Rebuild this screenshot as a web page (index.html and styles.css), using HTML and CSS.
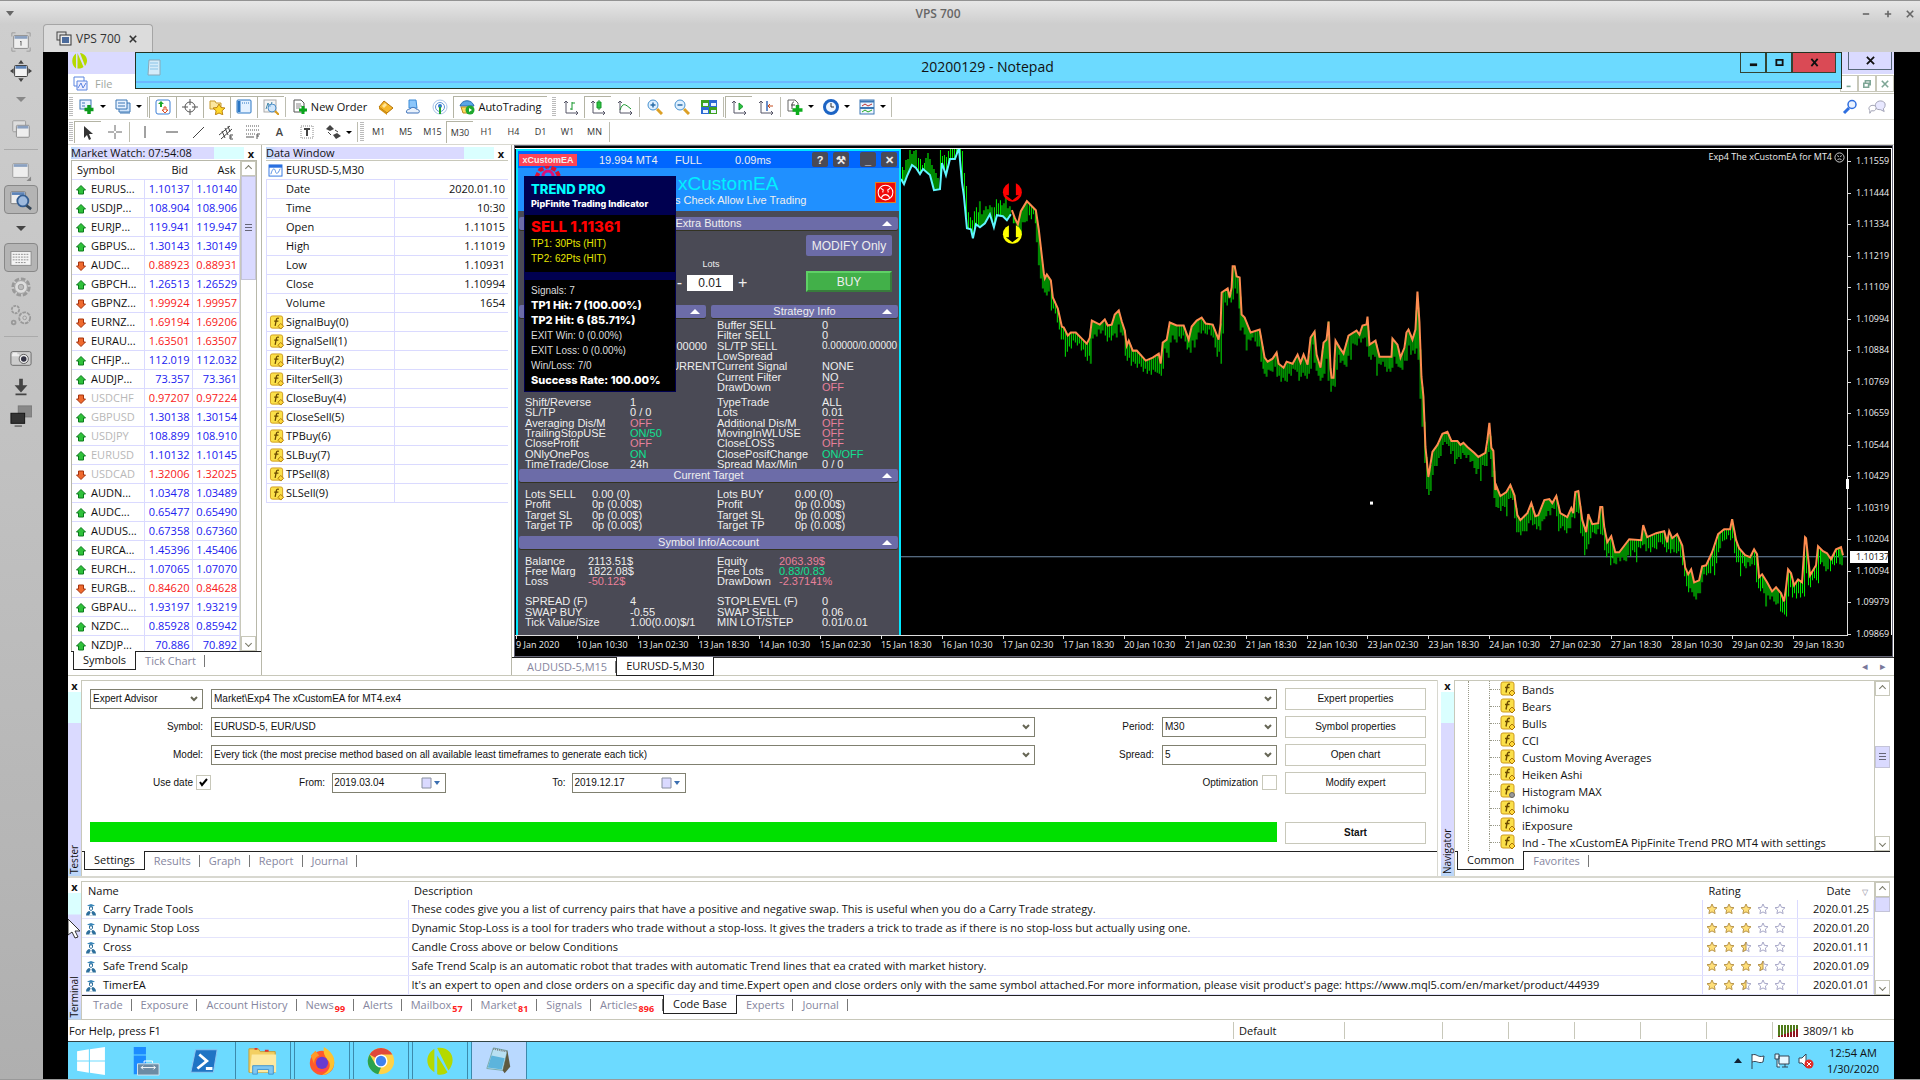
FILE: index.html
```html
<!DOCTYPE html>
<html lang="en">
<head>
    <meta charset="UTF-8">
    <meta name="viewport" content="width=device-width, initial-scale=1.0">
    <title>VPS 700</title>
    <link rel="stylesheet" href="styles.css">
</head>
<body>

<!-- shared icons -->
<svg class="sprite" aria-hidden="true">
    <symbol id="up" viewBox="0 0 12 12"><path d="M6 1.500l4.500 4.500H8.500v4h-5V6h-2z" fill="#2fc13a" stroke="#0c7a1c"/></symbol>
    <symbol id="down" viewBox="0 0 12 12"><path d="M6 10.500L1.500 6h2V2h5v4h2z" fill="#ef6a2e" stroke="#a5340f"/></symbol>
    <symbol id="fx" viewBox="0 0 16 16"><rect x="1" y="1" width="13" height="13" rx="2" fill="#fbe04a" stroke="#cf9b1d"/><path d="M10 3.500c-2-.8-2.500.5-2.800 2L6 11.500M5 6.500h4.500" fill="none" stroke="#6b4a00" stroke-width="1.400"/><path d="M12 9l3 3-3 3-3-3z" fill="#ffd83a" stroke="#a87509"/></symbol>
    <symbol id="fxg" viewBox="0 0 16 16"><rect x="1" y="1" width="13" height="13" rx="2" fill="#fbe04a" stroke="#cf9b1d"/><path d="M10 3.500c-2-.8-2.500.5-2.800 2L6 11.500M5 6.500h4.500" fill="none" stroke="#6b4a00" stroke-width="1.400"/><circle cx="12" cy="12" r="2.500" fill="#999" stroke="#666"/></symbol>
    <symbol id="expert" viewBox="0 0 12 12"><path d="M2 1.500L6 0l4 1.500L6 3z" fill="#3a86b8"/><path d="M4.500 3h3v2.500L6 6.500 4.500 5.500z" fill="#fff" stroke="#2d6f9c"/><path d="M1 11.500c0-3 2-4.500 3.500-4.500L6 9l1.500-2c1.500 0 3.500 1.500 3.500 4.500z" fill="#2d6f9c"/><path d="M4 11.500L6 8l2 3.500z" fill="#fff"/></symbol>
    <symbol id="star" viewBox="0 0 12 12"><path d="M6 1l1.500 3.300 3.500.4-2.600 2.400.7 3.500L6 8.900l-3.100 1.700.7-3.500L1 4.700l3.500-.4z"/></symbol>
    <symbol id="halfstar" viewBox="0 0 12 12"><path d="M6 1l1.500 3.300 3.500.4-2.600 2.400.7 3.500L6 8.900l-3.100 1.700.7-3.500L1 4.700l3.500-.4z" fill="#fff" stroke="#a8a8c8"/><path d="M6 1v7.900l-3.100 1.700.7-3.500L1 4.700l3.500-.4z" fill="#ffdf78" stroke="#b9954a"/></symbol>
</svg>

<header class="host-title">
    <span class="host-menu"></span>
    <h1>VPS 700</h1>
    <div class="host-buttons">
        <button aria-label="Minimize"><svg viewBox="0 0 10 10"><path d="M1 5h8"/></svg></button>
        <button aria-label="Maximize"><svg viewBox="0 0 10 10"><path d="M1 5h8M5 1v8"/></svg></button>
        <button aria-label="Close"><svg viewBox="0 0 10 10"><path d="M1 1l8 8M9 1L1 9"/></svg></button>
    </div>
</header>
<div class="host-tabs">
    <div class="host-tab">
        <svg viewBox="0 0 16 16" width="16" height="16"><rect x="1" y="1" width="9" height="8" fill="#ddd" stroke="#444"/><rect x="4" y="4" width="11" height="10" fill="#eee" stroke="#333"/><rect x="6" y="6" width="7" height="6" fill="#4a6a9c"/></svg>
        VPS 700
        <button aria-label="Close tab"><svg viewBox="0 0 10 10"><path d="M1 1l8 8M9 1L1 9"/></svg></button>
    </div>
</div>

<div class="host">
    <nav class="side">
        <button aria-label="Actual size"><svg viewBox="0 0 24 24"><path d="M2 6V2h4M18 2h4v4M22 18v4h-4M6 22H2v-4" fill="none" stroke="#999"/><rect x="4" y="5" width="16" height="14" rx="1" fill="#eee" stroke="#888"/><path d="M5 7h14" stroke="#8aa0c0" stroke-width="3"/><path d="M11 12l1-1v5" fill="none" stroke="#555"/></svg></button>
        <button aria-label="Full screen"><svg viewBox="0 0 24 24"><path d="M12 0l3 4H9zM12 24l3-4H9zM0 12l4-3v6zM24 12l-4-3v6z" fill="#444"/><rect x="5" y="6" width="14" height="12" rx="1" fill="#f4f4f4" stroke="#333"/><path d="M6 8h12" stroke="#5e84b8" stroke-width="3"/></svg></button>
        <button aria-label="More" class="caret off"></button>
        <button aria-label="Windows"><svg viewBox="0 0 24 24"><rect x="3" y="3" width="14" height="12" rx="1" fill="#ddd" stroke="#999"/><rect x="7" y="8" width="14" height="13" rx="1" fill="#eee" stroke="#888"/><path d="M8 10h12" stroke="#8aa0c0" stroke-width="3"/></svg></button>
        <hr>
        <button aria-label="Resize"><svg viewBox="0 0 24 24"><rect x="3" y="4" width="17" height="15" rx="1" fill="#eee" stroke="#999"/><path d="M4 6h15" stroke="#8aa0c0" stroke-width="3"/><path d="M23 18v5h-5z" fill="#888"/></svg></button>
        <button aria-label="Scale" class="on"><svg viewBox="0 0 24 24"><rect x="1" y="3" width="16" height="13" rx="1" fill="#eee" stroke="#777"/><path d="M2 5h14" stroke="#5e84b8" stroke-width="3"/><circle cx="14" cy="13" r="6" fill="#9db9dd" stroke="#345e92" stroke-width="2"/><path d="M18 18l5 4" stroke="#345" stroke-width="3"/></svg></button>
        <button aria-label="Scale options" class="caret"></button>
        <button aria-label="Keyboard" class="on"><svg viewBox="0 0 24 24"><rect x="1" y="5" width="22" height="15" fill="#f4f4f4" stroke="#888"/><path d="M3 8h18M3 11h18M3 14h18M6 17h12" stroke="#888" stroke-dasharray="2 1"/></svg></button>
        <button aria-label="Settings"><svg viewBox="0 0 24 24" fill="#ccc" stroke="#999"><circle cx="12" cy="12" r="9" stroke-width="3" stroke-dasharray="5 2"/><circle cx="12" cy="12" r="7" fill="#ddd"/><circle cx="12" cy="12" r="3" fill="#bbb"/></svg></button>
        <button aria-label="Tools"><svg viewBox="0 0 24 24" fill="#ccc" stroke="#999"><circle cx="16" cy="14" r="6" stroke-width="2" stroke-dasharray="4 1"/><circle cx="16" cy="14" r="2"/><circle cx="6" cy="5" r="4" stroke-width="2" stroke-dasharray="3 1"/><circle cx="4" cy="19" r="2" stroke-width="2"/></svg></button>
        <hr>
        <button aria-label="Screenshot"><svg viewBox="0 0 24 24"><rect x="1" y="5" width="22" height="15" rx="2" fill="#ccc" stroke="#666"/><path d="M2 9h8M3 7h5" stroke="#eee" stroke-width="2"/><circle cx="15" cy="13" r="5" fill="#eee" stroke="#555"/><circle cx="15" cy="13" r="3" fill="#334"/></svg></button>
        <button aria-label="Download"><svg viewBox="0 0 24 24"><path d="M10 3h4v7h5l-7 8-7-8h5zM6 19h12v2H6z" fill="#444"/></svg></button>
        <button aria-label="Monitors"><svg viewBox="0 0 24 24"><rect x="9" y="1" width="15" height="12" fill="#888" stroke="#777"/><rect x="1" y="9" width="15" height="11" fill="#333" stroke="#111"/><path d="M5 23h8" stroke="#777" stroke-width="2"/></svg></button>
    </nav>

    <div class="desktop">
        <div class="mt4">
            <div class="mt4-title">
                <svg viewBox="0 0 18 18" width="18" height="18"><path d="M6 1.500v15C1 13 1 5 6 1.500zM7.500 1l6 14c-2 1.500-4 1.700-6 1.500zM10 1c7 1 9 8 5 13z" fill="#b5d900"/></svg>
                <button class="mt4-close" aria-label="Close MetaTrader"><svg viewBox="0 0 10 10"><path d="M1 1l8 8M9 1L1 9"/></svg></button>
            </div>
            <div class="mt4-menu">
                <svg viewBox="0 0 16 16" width="16" height="16"><path d="M2 1h10v9H2z" fill="#fff" stroke="#5b85e0"/><path d="M5 5h10v9H5z" fill="#eef" stroke="#5b85e0"/><path d="M6 12l3-5 2 5 3-5" fill="none" stroke="#5b85e0"/></svg>
                <a href="#">File</a>
                <div class="mdi">
                    <button aria-label="Minimize chart"><svg viewBox="0 0 10 10"><path d="M2 8h5"/></svg></button>
                    <button aria-label="Restore chart"><svg viewBox="0 0 10 10"><path d="M3 4V1h6v5H7M1 4h6v5H1z"/></svg></button>
                    <button aria-label="Close chart"><svg viewBox="0 0 10 10"><path d="M1 1l8 8M9 1L1 9"/></svg></button>
                </div>
            </div>

            <div class="toolbar">
                <i class="grip"></i>
                <button class="tool drop" aria-label="New chart"><svg viewBox="0 0 16 16"><rect x="1" y="1" width="11" height="9" fill="#e8f2ff" stroke="#3a77b5"/><path d="M3 4h3M3 7h3" stroke="#3a77b5"/><path d="M10 6v9M5.500 10.500h9" stroke="#0b9a1c" stroke-width="3.500"/></svg></button>
                <button class="tool drop" aria-label="Profiles"><svg viewBox="0 0 16 16"><path d="M4 4h11v9H4z" fill="#cfe3fa" stroke="#3a77b5"/><path d="M1 1h11v9H1z" fill="#e8f2ff" stroke="#3a77b5"/><path d="M3 4h7M3 7h7M5 14h10" stroke="#3a77b5"/></svg></button>
                <i class="sep"></i>
                <button class="tool down" aria-label="Market Watch"><svg viewBox="0 0 16 16"><rect x="1" y="1" width="14" height="14" rx="2" fill="#fff" stroke="#3b7fd6"/><path d="M6 2l3 3H7v3H5V5H3z" fill="#1da82a"/><path d="M10 14l-3-3h2V8h2v3h2z" fill="#fff" stroke="#dd4a22"/></svg></button>
                <button class="tool down" aria-label="Data Window"><svg viewBox="0 0 16 16" fill="none" stroke="#555"><circle cx="8" cy="8" r="5"/><path d="M8 0v6M8 10v6M0 8h6M10 8h6"/></svg></button>
                <button class="tool down" aria-label="Navigator"><svg viewBox="0 0 16 16"><path d="M1 2h5l1 2h5v6H1z" fill="#fbe7a0" stroke="#c79b2f"/><path d="M10 5l2 3.500 4 .5-3 2.800.8 4L10 14l-3.600 1.800.7-4L4 9l4-.5z" fill="#ffd92e" stroke="#bd8410"/></svg></button>
                <button class="tool down" aria-label="Terminal"><svg viewBox="0 0 16 16"><rect x="1" y="1" width="14" height="13" rx="1" fill="#e4f1ff" stroke="#2a76c4"/><path d="M3 2v11" stroke="#2a76c4" stroke-width="3"/><path d="M6 4h7" stroke="#2a76c4" stroke-dasharray="1 1"/></svg></button>
                <button class="tool down" aria-label="Strategy Tester"><svg viewBox="0 0 16 16"><rect x="1" y="1" width="12" height="12" fill="#f4f4f4" stroke="#aaa"/><path d="M3 10l2-6 2 4 2-5" fill="none" stroke="#48a"/><circle cx="9" cy="9" r="4" fill="#bfe0ffaa" stroke="#4d8fc9"/><path d="M12 12l4 4" stroke="#d99a1c" stroke-width="2"/></svg></button>
                <i class="sep"></i>
                <button class="tool order"><svg viewBox="0 0 16 16"><path d="M2 1h7l3 3v9H2z" fill="#fff" stroke="#555"/><path d="M4 5h5M4 7h6M4 9h4" stroke="#888"/><path d="M11 7v8M7 11h8" stroke="#0aa51c" stroke-width="3"/></svg>New Order</button>
                <button class="tool" aria-label="MetaEditor"><svg viewBox="0 0 16 16"><path d="M1 8l5-6 9 7-6 5z" fill="#f6b82c" stroke="#b37209"/><path d="M1 8l8 6v2L1 10z" fill="#d3900f"/><path d="M4 7l3-3 2 2-3 3z" fill="#ffe59a"/></svg></button>
                <button class="tool" aria-label="Options"><svg viewBox="0 0 16 16"><path d="M4 1h7l1 8H4z" fill="#8cc6fa" stroke="#3a8ad6"/><path d="M2 14c-2-3 2-4 3-4 2-3 6-1 6 0 4 0 4 4 2 4z" fill="#e9f1fb" stroke="#3a6fb8"/></svg></button>
                <button class="tool" aria-label="Signals"><svg viewBox="0 0 16 16" fill="none"><circle cx="8" cy="8" r="7" stroke="#a9c4e8"/><circle cx="8" cy="8" r="4.500" stroke="#5d93d6"/><circle cx="8" cy="7" r="2" fill="#2f79c9"/><path d="M8 8v7" stroke="#1ea52c" stroke-width="2"/></svg></button>
                <button class="tool down auto"><svg viewBox="0 0 16 16"><path d="M1 7c2-7 12-7 14 0z" fill="#5aa6e8" stroke="#2a6cb0"/><path d="M2 8h12l-2 6H4z" fill="#ffd85c" stroke="#b98a1c"/><circle cx="11" cy="11" r="4.500" fill="#1fa82d"/><path d="M10 9v4l3-2z" fill="#fff"/></svg>AutoTrading</button>
                <i class="grip"></i>
                <button class="tool" aria-label="Bar chart"><svg viewBox="0 0 16 16" fill="none"><path d="M3 2v12h12M1 4l2-2 2 2M13 12l2 2-2 2" stroke="#556"/><path d="M9 3v8M9 4h3M7 10h2" stroke="#15962a"/></svg></button>
                <button class="tool down" aria-label="Candlesticks"><svg viewBox="0 0 16 16" fill="none"><path d="M3 2v12h12M1 4l2-2 2 2M13 12l2 2-2 2" stroke="#556"/><path d="M9 1v10" stroke="#15962a"/><path d="M7 3h4v6H7z" fill="#2cc441" stroke="#15962a"/></svg></button>
                <button class="tool" aria-label="Line chart"><svg viewBox="0 0 16 16" fill="none"><path d="M3 2v12h12M1 4l2-2 2 2M13 12l2 2-2 2" stroke="#556"/><path d="M3 11c3-8 5-6 11-1" stroke="#15962a"/></svg></button>
                <i class="sep"></i>
                <button class="tool" aria-label="Zoom in"><svg viewBox="0 0 16 16"><circle cx="6" cy="6" r="5" fill="#dff0ff" stroke="#4691cf"/><path d="M3.500 6h5M6 3.500v5" stroke="#2a6ca8" stroke-width="1.500"/><path d="M10 10l5 5" stroke="#dca026" stroke-width="3"/></svg></button>
                <button class="tool" aria-label="Zoom out"><svg viewBox="0 0 16 16"><circle cx="6" cy="6" r="5" fill="#dff0ff" stroke="#4691cf"/><path d="M3.500 6h5" stroke="#2a6ca8" stroke-width="1.500"/><path d="M10 10l5 5" stroke="#dca026" stroke-width="3"/></svg></button>
                <button class="tool" aria-label="Tile windows"><svg viewBox="0 0 16 16"><path d="M0 1h8v7H0zM8 8h8v7H8z" fill="#3da21f"/><path d="M8 1h8v7H8zM0 8h8v7H0z" fill="#2d6ad4"/><path d="M2 4h5v3H2zM10 4h5v3h-5zM2 11h5v3H2zM10 11h5v3h-5z" fill="#eaf4ff"/></svg></button>
                <i class="sep"></i>
                <button class="tool down" aria-label="Auto scroll"><svg viewBox="0 0 16 16" fill="none"><path d="M3 2v12h12M1 4l2-2 2 2M13 12l2 2-2 2" stroke="#556"/><path d="M8 4v7l4-3.500z" fill="#2cc441" stroke="#15962a"/></svg></button>
                <button class="tool" aria-label="Chart shift"><svg viewBox="0 0 16 16" fill="none"><path d="M3 2v12h12M1 4l2-2 2 2M13 12l2 2-2 2" stroke="#556"/><path d="M9 2v10" stroke="#3668b8" stroke-width="1.500"/><path d="M10 7h5M12 5l-2 2 2 2" stroke="#c44a1c"/></svg></button>
                <i class="sep"></i>
                <button class="tool drop" aria-label="Indicators"><svg viewBox="0 0 16 16"><path d="M1 1h7l3 3v8H1z" fill="#fff" stroke="#666"/><path d="M7 3C5 3 5 5 5 10M4 6h4" fill="none" stroke="#444"/><path d="M10.500 6v10M5.500 11h10" stroke="#0cad1d" stroke-width="3.500"/></svg></button>
                <button class="tool drop" aria-label="Periods"><svg viewBox="0 0 16 16"><circle cx="8" cy="8" r="6.500" fill="#eef6ff" stroke="#1c64c4" stroke-width="3"/><path d="M8 4v4h3" fill="none" stroke="#333"/></svg></button>
                <button class="tool drop" aria-label="Templates"><svg viewBox="0 0 16 16"><rect x="1" y="1" width="14" height="14" fill="#eef6ff" stroke="#3a77b5"/><path d="M1 2.500h14M1 9h14" stroke="#3a77b5" stroke-width="2"/><path d="M3 7l3-2 3 2 4-2" fill="none" stroke="#b33"/><path d="M3 13l3-2 3 2 4-2" fill="none" stroke="#2a2"/></svg></button>
                <i class="sep"></i>
                <div class="toolbar-right">
                    <button class="tool" aria-label="Search"><svg viewBox="0 0 16 16"><circle cx="10" cy="5.500" r="4" fill="#eaf2ff" stroke="#2f6fe0" stroke-width="1.500"/><path d="M7 9l-5 5" stroke="#2f6fe0" stroke-width="3"/></svg></button>
                    <button class="tool" aria-label="Chat"><svg viewBox="0 0 20 16"><path d="M8 7c0-8 12-7 11-1 0 2-1 3-2 4l1 3-4-2C9 11 8 9 8 7z" fill="#e8e8ff" stroke="#999aae"/><path d="M1 10c0-5 8-5 8-1 0 3-3 4-5 3l-2 3v-3z" fill="#fff" stroke="#999aae"/></svg></button>
                </div>
            </div>
            <div class="toolbar">
                <i class="grip"></i>
                <button class="tool down" aria-label="Cursor"><svg viewBox="0 0 16 16"><path d="M4 1v12l3-3 2 5 2-1-2-5h4z" fill="#333"/></svg></button>
                <button class="tool" aria-label="Crosshair"><svg viewBox="0 0 16 16" stroke="#666"><path d="M8 1v6M8 9v6M1 8h6M9 8h6"/></svg></button>
                <i class="sep"></i>
                <button class="tool" aria-label="Vertical line"><svg viewBox="0 0 16 16" stroke="#444"><path d="M8 2v12"/></svg></button>
                <button class="tool" aria-label="Horizontal line"><svg viewBox="0 0 16 16" stroke="#444"><path d="M2 8h12"/></svg></button>
                <button class="tool" aria-label="Trendline"><svg viewBox="0 0 16 16" stroke="#444"><path d="M2 14L13 3"/></svg></button>
                <button class="tool" aria-label="Equidistant channel"><svg viewBox="0 0 16 16" stroke="#444"><path d="M1 11L12 2M3 15L14 5M4 7l3 7M7 4l3 7M10 2l2 6M12 11v4M12 11h3M12 13h2M12 15h3"/></svg></button>
                <button class="tool" aria-label="Fibonacci"><svg viewBox="0 0 16 16" stroke="#555"><path d="M1 2h13M1 6h13M1 10h10" stroke-dasharray="1 1"/><path d="M1 13h8M12 10v5M12 10h3M12 12h2"/></svg></button>
                <button class="tool letter">A</button>
                <button class="tool" aria-label="Text label"><svg viewBox="0 0 16 16"><rect x="2" y="2" width="12" height="12" fill="none" stroke="#888" stroke-dasharray="1 1"/><path d="M5 5h6M8 5v7" stroke="#444" stroke-width="2"/></svg></button>
                <button class="tool drop" aria-label="Arrows"><svg viewBox="0 0 16 16"><path d="M5 1l4 4-4 2-4-2zM11 15l-3-4 4-2 4 3z" fill="#444"/><path d="M3 8l3 3M10 6l3 2" stroke="#444"/></svg></button>
                <i class="sep"></i>
                <i class="grip"></i>
                <button class="tool period">M1</button>
                <button class="tool period">M5</button>
                <button class="tool period">M15</button>
                <button class="tool period down">M30</button>
                <button class="tool period">H1</button>
                <button class="tool period">H4</button>
                <button class="tool period">D1</button>
                <button class="tool period">W1</button>
                <button class="tool period">MN</button>
                <i class="sep"></i>
            </div>

            <div class="main">
                <section class="dock watch">
                    <div class="dock-head"><h2>Market Watch: 07:54:08</h2><i></i><button aria-label="Close Market Watch">x</button></div>
                    <div class="dock-body">
                        <div class="table-clip">
                            <table class="quotes">
                                <thead><tr><th>Symbol</th><th>Bid</th><th>Ask</th></tr></thead>
                                <tbody id="quotes"></tbody>
                            </table>
                        </div>
                        <div class="scroll"><button class="arrow up" aria-label="Scroll up"></button><span class="thumb tall"></span><button class="arrow" aria-label="Scroll down"></button></div>
                    </div>
                    <div class="tabs"><button class="active">Symbols</button><button>Tick Chart</button></div>
                </section>

                <section class="dock data">
                    <div class="dock-head"><h2>Data Window</h2><i></i><button aria-label="Close Data Window">x</button></div>
                    <div class="data-symbol"><svg viewBox="0 0 16 14" width="15" height="13"><rect x="1" y="1" width="14" height="12" fill="#fff" stroke="#2a70e0"/><path d="M1 2.500h14" stroke="#2a70e0" stroke-width="3"/><path d="M3 11c2-7 4-7 5-3s3 2 5-3" fill="none" stroke="#4a86e0"/></svg>EURUSD-5,M30</div>
                    <table class="values"><tbody id="values"></tbody></table>
                </section>

                <section class="chart">
                    <div class="chart-frame">
                        <div class="chart-body">
                            <div class="ea">
                                <div class="ea-top">
                                    <span class="ea-label">xCustomEA</span>
                                    <span class="ea-ver">19.994 MT4</span><span class="ea-full">FULL</span><span>0.09ms</span>
                                    <div class="ea-btns"><button>?</button><button>⚒</button><button class="gap">_</button><button>✕</button></div>
                                </div>
                                <div class="ea-name">
                                    <svg class="ea-logo" viewBox="0 0 40 24"><path d="M2 24L12 4l8-4 8 4 10 20" fill="none" stroke="#e01030" stroke-width="4" stroke-dasharray="5 2"/><circle cx="20" cy="10" r="5" fill="none" stroke="#e0107a" stroke-width="3"/></svg>
                                    <h3>xCustomEA</h3>
                                    <p>s Check Allow Live Trading</p>
                                    <svg class="sad" viewBox="0 0 20 20"><rect width="20" height="20" fill="#f00808" stroke="#e08020" stroke-width="2"/><circle cx="10" cy="10" r="7" fill="none" stroke="#fff"/><path d="M6 15c2-4 6-4 8 0M5.500 6l3 2M14.500 6l-3 2" fill="none" stroke="#fff"/><path d="M7 9h1M12 9h1" stroke="#fff" stroke-width="2"/></svg>
                                </div>
                                <div class="bar"><span>Extra Buttons</span></div>
                                <div class="ea-trade">
                                    <button class="modify">MODIFY Only</button>
                                    <label class="lots" for="lots">Lots</label>
                                    <div class="lot-box"><button>-</button><input id="lots" type="text" value="0.01"><button>+</button></div>
                                    <button class="buy">BUY</button>
                                </div>
                                <div class="bars"><div class="bar"></div><div class="bar"><span>Strategy Info</span></div></div>
                                <dl class="info wide top">
                                    <dt></dt><dd></dd><dt>Buffer SELL</dt><dd>0</dd>
                                    <dt></dt><dd></dd><dt>Filter SELL</dt><dd>0</dd>
                                    <dt></dt><dd class="inset">.00000</dd><dt>SL/TP SELL</dt><dd class="long">0.00000/0.00000</dd>
                                    <dt></dt><dd></dd><dt>LowSpread</dt><dd></dd>
                                    <dt></dt><dd class="to-edge">URRENT</dd><dt>Current Signal</dt><dd>NONE</dd>
                                    <dt></dt><dd></dd><dt>Current Filter</dt><dd>NO</dd>
                                    <dt></dt><dd></dd><dt>DrawDown</dt><dd class="off">OFF</dd>
                                </dl>
                                <dl class="info wide">
                                    <dt>Shift/Reverse</dt><dd>1</dd><dt>TypeTrade</dt><dd>ALL</dd>
                                    <dt>SL/TP</dt><dd>0 / 0</dd><dt>Lots</dt><dd>0.01</dd>
                                    <dt>Averaging Dis/M</dt><dd class="off">OFF</dd><dt>Additional Dis/M</dt><dd class="off">OFF</dd>
                                    <dt>TrailingStopUSE</dt><dd class="on">ON/50</dd><dt>MovingInWLUSE</dt><dd class="off">OFF</dd>
                                    <dt>CloseProfit</dt><dd class="off">OFF</dd><dt>CloseLOSS</dt><dd class="off">OFF</dd>
                                    <dt>ONlyOnePos</dt><dd class="on">ON</dd><dt>ClosePosifChange</dt><dd class="on">ON/OFF</dd>
                                    <dt>TimeTrade/Close</dt><dd>24h</dd><dt>Spread Max/Min</dt><dd>0 / 0</dd>
                                </dl>
                                <div class="bar"><span>Current Target</span></div>
                                <dl class="info target">
                                    <dt>Lots SELL</dt><dd>0.00 (0)</dd><dt>Lots BUY</dt><dd>0.00 (0)</dd>
                                    <dt>Profit</dt><dd>0p (0.00$)</dd><dt>Profit</dt><dd>0p (0.00$)</dd>
                                    <dt>Target SL</dt><dd>0p (0.00$)</dd><dt>Target SL</dt><dd>0p (0.00$)</dd>
                                    <dt>Target TP</dt><dd>0p (0.00$)</dd><dt>Target TP</dt><dd>0p (0.00$)</dd>
                                </dl>
                                <div class="bar"><span>Symbol Info/Account</span></div>
                                <dl class="info account">
                                    <dt>Balance</dt><dd>2113.51$</dd><dt>Equity</dt><dd class="off">2063.39$</dd>
                                    <dt>Free Marg</dt><dd>1822.08$</dd><dt>Free Lots</dt><dd class="on">0.83/0.83</dd>
                                    <dt>Loss</dt><dd class="off">-50.12$</dd><dt>DrawDown</dt><dd class="off">-2.37141%</dd>
                                </dl>
                                <dl class="info wide">
                                    <dt>SPREAD (F)</dt><dd>4</dd><dt>STOPLEVEL (F)</dt><dd>0</dd>
                                    <dt>SWAP BUY</dt><dd>-0.55</dd><dt>SWAP SELL</dt><dd>0.06</dd>
                                    <dt>Tick Value/Size</dt><dd>1.00(0.00)$/1</dd><dt>MIN LOT/STEP</dt><dd>0.01/0.01</dd>
                                </dl>

                                <div class="trend">
                                    <div class="trend-head"><h4>TREND PRO</h4><b>PipFinite Trading Indicator</b></div>
                                    <div class="trend-signal"><h4>SELL 1.11361</h4><p>TP1: 30Pts (HIT)</p><p>TP2: 62Pts (HIT)</p></div>
                                    <div class="trend-stats">
                                        <p>Signals: 7</p>
                                        <p><b>TP1 Hit: 7 (100.00%)</b></p>
                                        <p><b>TP2 Hit: 6 (85.71%)</b></p>
                                        <p>EXIT Win: 0 (0.00%)</p>
                                        <p>EXIT Loss: 0 (0.00%)</p>
                                        <p>Win/Loss: 7/0</p>
                                        <p><b>Success Rate: 100.00%</b></p>
                                    </div>
                                </div>
                            </div>
                            <div class="plot">
                                <svg id="plot" viewBox="901 150 947 484" preserveAspectRatio="none">
                                    <path d="M901 556.500h947" stroke="#708ba8"/>
                                    <path id="barsDark" stroke="#008800" stroke-width="2"/>
                                    <path id="barsLight" stroke="#00f000"/>
                                    <polyline id="upLine" fill="none" stroke="#5ff5ff" stroke-width="2"/>
                                    <polyline id="downLine" fill="none" stroke="#ff8c50" stroke-width="2"/>
                                    <!-- sell and close markers -->
                                    <circle cx="1012.500" cy="193" r="9.500" fill="#f00"/>
                                    <path d="M1009 182h7v14h3l-6.500 5-6.500-5h3z" fill="#000"/>
                                    <circle cx="1012.500" cy="235" r="9.500" fill="#ff0"/>
                                    <path d="M1009 224h7v14h3l-6.500 5-6.500-5h3z" fill="#000"/>
                                    <rect x="1371" y="502" width="2" height="2" fill="none" stroke="#fff"/>
                                </svg>
                                <span class="plot-title">Exp4 The xCustomEA for MT4 <svg viewBox="0 0 12 12" width="11" height="11" fill="none" stroke="#ddd"><circle cx="6" cy="6" r="5"/><path d="M3.500 9c1-2 4-2 5 0M3.500 4l2 1M8.500 4l-2 1"/></svg></span>
                            </div>
                            <div class="prices" id="prices"><span class="now">1.10137</span></div>
                        </div>
                        <div class="times" id="times"></div>
                    </div>
                    <div class="chart-tabs"><div class="tabs"><button>AUDUSD-5,M15</button><button class="active">EURUSD-5,M30</button></div><span class="tab-nav"><button aria-label="Previous tabs">◂</button><button aria-label="Next tabs">▸</button></span></div>
                </section>
            </div>

            <div class="lower">
                <div class="strip"><button aria-label="Close Tester">x</button><i></i><span>Tester</span></div>
                <section class="tester">
                    <form class="tester-form">
                        <select aria-label="Type"><option>Expert Advisor</option></select>
                        <select class="file" aria-label="Expert"><option>Market\Exp4 The xCustomEA for MT4.ex4</option></select>
                        <button type="button">Expert properties</button>

                        <label for="symbol">Symbol:</label>
                        <select id="symbol"><option>EURUSD-5, EUR/USD</option></select>
                        <label for="period">Period:</label>
                        <select id="period"><option>M30</option></select>
                        <button type="button">Symbol properties</button>

                        <label for="model">Model:</label>
                        <select id="model"><option>Every tick (the most precise method based on all available least timeframes to generate each tick)</option></select>
                        <label for="spread">Spread:</label>
                        <select id="spread"><option>5</option></select>
                        <button type="button">Open chart</button>

                        <div class="dates">
                            <label for="useDate">Use date</label><input id="useDate" type="checkbox" checked>
                            <label for="from">From:</label>
                            <span class="date-box"><input id="from" type="text" value="2019.03.04"><svg viewBox="0 0 20 12" width="20" height="12"><path d="M1 1h9v10H1z" fill="#dadaff" stroke="#8890a0"/><path d="M13 4h6l-3 4z" fill="#3a6fb0"/></svg></span>
                            <label for="to">To:</label>
                            <span class="date-box"><input id="to" type="text" value="2019.12.17"><svg viewBox="0 0 20 12" width="20" height="12"><path d="M1 1h9v10H1z" fill="#dadaff" stroke="#8890a0"/><path d="M13 4h6l-3 4z" fill="#3a6fb0"/></svg></span>
                        </div>
                        <div class="optim"><label for="optim">Optimization</label><input id="optim" type="checkbox"></div>
                        <button type="button">Modify expert</button>

                        <div class="progress"></div>
                        <button type="button" class="start">Start</button>
                    </form>
                    <div class="tabs"><button class="active">Settings</button><button>Results</button><button>Graph</button><button>Report</button><button>Journal</button></div>
                </section>
                <div class="strip nav-strip"><button aria-label="Close Navigator">x</button><i></i><span>Navigator</span></div>
                <section class="navigator">
                    <div class="tree-box">
                        <ul class="tree" id="tree"></ul>
                        <div class="scroll"><button class="arrow up" aria-label="Scroll up"></button><span class="thumb mid"></span><button class="arrow" aria-label="Scroll down"></button></div>
                    </div>
                    <div class="tabs"><button class="active">Common</button><button>Favorites</button></div>
                </section>
            </div>

            <div class="lower terminal-row">
                <div class="strip short"><button aria-label="Close Terminal">x</button><i></i><span>Terminal</span></div>
                <section class="terminal">
                    <div class="terminal-box">
                        <table class="codebase">
                            <thead><tr><th>Name</th><th>Description</th><th>Rating</th><th>Date <small>▽</small></th></tr></thead>
                            <tbody id="codebase"></tbody>
                        </table>
                        <div class="scroll"><button class="arrow up" aria-label="Scroll up"></button><span class="thumb"></span><button class="arrow" aria-label="Scroll down"></button></div>
                    </div>
                    <div class="tabs">
                        <button>Trade</button><button>Exposure</button><button>Account History</button><button>News<sub>99</sub></button><button>Alerts</button><button>Mailbox<sub>57</sub></button><button>Market<sub>81</sub></button><button>Signals</button><button>Articles<sub>896</sub></button><button class="active">Code Base</button><button>Experts</button><button>Journal</button>
                    </div>
                </section>
                <svg class="cursor" viewBox="0 0 12 20"><path d="M0 0v16l4-3 3 6 3-1-3-6h5z" fill="#fff" stroke="#333"/></svg>
            </div>

            <footer class="status">
                <span class="help">For Help, press F1</span><span class="profile">Default</span><span class="w98"></span><span class="w66"></span><span class="w66"></span><span class="w66"></span><span class="w66"></span><span class="w66"></span>
                <span class="traffic"><svg viewBox="0 0 22 12" width="22" height="12"><path d="M1 0v11M4 0v10M7 0v9M10 0v8M13 0v7M16 0v6M19 0v5" stroke="#4f7a1a" stroke-width="2"/><path d="M1 12v-1M4 12v-2M7 12V9M10 12V8M13 12V7M16 12V6M19 12V4" stroke="#8f1820" stroke-width="2"/></svg>3809/1 kb</span>
            </footer>
        </div>

        <div class="notepad">
            <svg viewBox="0 0 14 18" width="14" height="18"><path d="M2 2h11v15H1z" fill="#d4ecfa" stroke="#8aa8b8"/><path d="M3 5h8M3 8h8M3 11h8" stroke="#8ac4e8"/></svg>
            <h2>20200129 - Notepad</h2>
            <div class="win-buttons">
                <button aria-label="Minimize Notepad"><svg viewBox="0 0 10 10"><path d="M1 7.500h8" stroke-width="3"/></svg></button>
                <button aria-label="Maximize Notepad"><svg viewBox="0 0 10 10"><path d="M1.500 2h7v6h-7z" fill="none"/></svg></button>
                <button class="red" aria-label="Close Notepad"><svg viewBox="0 0 10 10"><path d="M1.500 1l7 8M8.500 1l-7 8"/></svg></button>
            </div>
        </div>

        <div class="taskbar">
            <button aria-label="Start menu"><svg viewBox="0 0 28 28"><path d="M1 5l11-2v10.500H1zM13 3l14-2v12.500H13zM1 14.500h11V25L1 23zM13 14.500h14V27l-14-2z" fill="#fff"/></svg></button>
            <button aria-label="Server Manager"><svg viewBox="0 0 32 32"><path d="M4 1h13v8H4zM4 10h13v20H4z" fill="#1c8cff"/><path d="M8 19h23v12H8z" fill="#6c8ba4" stroke="#d8e6f0"/><path d="M15 18v-2h9v2M12 23h15M14 21l-2 2 2 2M25 21l2 2-2 2" fill="none" stroke="#fff"/></svg></button>
            <button aria-label="PowerShell"><svg viewBox="0 0 32 32"><path d="M7 4h23l-4 24H2z" fill="#1f74c4" stroke="#8fc4f0"/><path d="M11 9l8 7-10 8M18 24h7" fill="none" stroke="#fff" stroke-width="3"/></svg></button>
            <button class="open" aria-label="Explorer"><svg viewBox="0 0 32 32"><path d="M1 3h10l2 3h16v22H1z" fill="#f3cf63" stroke="#c79b2f"/><path d="M4 9h26v19H2z" fill="#fde9a2"/><path d="M5 30v-9h22v9h-5v-5H10v5z" fill="#7ec6f2" stroke="#3d92d0"/><path d="M7 3h3M18 5h4" stroke="#d33" stroke-width="2"/></svg></button>
            <button class="open" aria-label="Firefox"><svg viewBox="0 0 32 32"><circle cx="16" cy="18" r="13" fill="#ff5a2a"/><path d="M18 1c8 5 12 10 11 18s-8 12-13 12c8-4 10-10 7-15-4-5-6-8-5-15z" fill="#ffc22e"/><path d="M4 10l5-5 4 5c-4 2-6 5-5 10z" fill="#ff9a26"/><circle cx="16" cy="18" r="6.500" fill="#6a3bd0"/><path d="M8 24c6 3 12 2 15-3 0 7-12 9-15 3z" fill="#ff3d66"/></svg></button>
            <button class="open" aria-label="Chrome"><svg viewBox="0 0 32 32"><circle cx="16" cy="16" r="14" fill="#ffd247"/><path d="M16 16L3.900 9A14 14 0 0 1 28.100 9H16z" fill="#e0483a"/><path d="M3.900 9L10 19.500 16 23l-3 7A14 14 0 0 1 3.900 9z" fill="#2ba24c"/><circle cx="16" cy="16" r="7" fill="#fff"/><circle cx="16" cy="16" r="5.500" fill="#3f82ee"/></svg></button>
            <button class="open" aria-label="MetaTrader"><svg viewBox="0 0 32 32"><path d="M10 3v25C0 22 0 9 10 3zM13 10l11 18c-4 3-8 3-11 2zM13 2c16-2 21 14 12 24z" fill="#b5d900"/></svg></button>
            <button class="open current" aria-label="Notepad"><svg viewBox="0 0 32 32"><path d="M10 2l15 3-5 21L3 24z" fill="#b8e0f2" stroke="#7aa"/><path d="M8 10l14 3-3 12-15-2z" fill="#5cb4dc"/><path d="M25 5l3 17-6 7-2-3z" fill="#5f5a40"/><path d="M10 3l15 3" stroke="#777" stroke-width="2" stroke-dasharray="1 1"/></svg></button>
            <div class="tray">
                <svg viewBox="0 0 8 6" width="8" height="6"><path d="M4 0l4 5H0z" fill="#123"/></svg>
                <svg viewBox="0 0 16 16" width="16" height="16"><path d="M2 1v15M2 2c5-2 5 3 12 1l-1 6c-5 2-6-2-11 0" fill="#fff" stroke="#345"/></svg>
                <svg viewBox="0 0 16 16" width="16" height="16"><path d="M5 3h10v8H5zM8 14h6M11 11v3M1 1h4v5H1zM3 6v8h3" fill="#e8f8ff" stroke="#345"/></svg>
                <svg viewBox="0 0 16 16" width="16" height="16"><path d="M1 5h3l4-4v13l-4-4H1z" fill="#fff" stroke="#345"/><circle cx="11" cy="11" r="4.500" fill="#e02c28"/><path d="M9 9l4 4M13 9l-4 4" stroke="#fff"/></svg>
                <div class="clock"><span>12:54 AM</span><span>1/30/2020</span></div>
            </div>
        </div>
    </div>
</div>

<script>
    // direction, symbol, bid, ask
    const quotes = [
        ['up', 'EURUS...', '1.10137', '1.10140'],
        ['up', 'USDJP...', '108.904', '108.906'],
        ['up', 'EURJP...', '119.941', '119.947'],
        ['up', 'GBPUS...', '1.30143', '1.30149'],
        ['down', 'AUDC...', '0.88923', '0.88931'],
        ['up', 'GBPCH...', '1.26513', '1.26529'],
        ['down', 'GBPNZ...', '1.99924', '1.99957'],
        ['down', 'EURNZ...', '1.69194', '1.69206'],
        ['down', 'EURAU...', '1.63501', '1.63507'],
        ['up', 'CHFJP...', '112.019', '112.032'],
        ['up', 'AUDJP...', '73.357', '73.361'],
        ['down', 'USDCHF', '0.97207', '0.97224'],
        ['up', 'GBPUSD', '1.30138', '1.30154'],
        ['up', 'USDJPY', '108.899', '108.910'],
        ['up', 'EURUSD', '1.10132', '1.10145'],
        ['down', 'USDCAD', '1.32006', '1.32025'],
        ['up', 'AUDN...', '1.03478', '1.03489'],
        ['up', 'AUDC...', '0.65477', '0.65490'],
        ['up', 'AUDUS...', '0.67358', '0.67360'],
        ['up', 'EURCA...', '1.45396', '1.45406'],
        ['up', 'EURCH...', '1.07065', '1.07070'],
        ['down', 'EURGB...', '0.84620', '0.84628'],
        ['up', 'GBPAU...', '1.93197', '1.93219'],
        ['up', 'NZDC...', '0.85928', '0.85942'],
        ['up', 'NZDJP...', '70.886', '70.892']
    ];
    document.getElementById('quotes').innerHTML = quotes.map(([dir, name, bid, ask]) =>
        `<tr class="${dir}"><td class="${name.endsWith('...') ? '' : 'muted'}"><svg width="12" height="12"><use href="#${dir}"/></svg>${name}</td><td>${bid}</td><td>${ask}</td></tr>`
    ).join('');

    const values = [['Date', '2020.01.10'], ['Time', '10:30'], ['Open', '1.11015'], ['High', '1.11019'], ['Low', '1.10931'], ['Close', '1.10994'], ['Volume', '1654']];
    const buffers = ['SignalBuy', 'SignalSell', 'FilterBuy', 'FilterSell', 'CloseBuy', 'CloseSell', 'TPBuy', 'SLBuy', 'TPSell', 'SLSell'];
    document.getElementById('values').innerHTML =
        values.map(([name, value]) => `<tr><td class="plain">${name}</td><td>${value}</td></tr>`).join('') +
        buffers.map((name, i) => `<tr><td><svg width="16" height="16"><use href="#fx"/></svg>${name}(${i})</td><td></td></tr>`).join('');

    const tree = ['Bands', 'Bears', 'Bulls', 'CCI', 'Custom Moving Averages', 'Heiken Ashi', 'Histogram MAX', 'Ichimoku', 'iExposure', 'Ind - The xCustomEA PipFinite Trend PRO MT4 with settings'];
    document.getElementById('tree').innerHTML = tree.map(name =>
        `<li><svg width="16" height="16"><use href="#${name === 'Histogram MAX' ? 'fxg' : 'fx'}"/></svg>${name}</li>`
    ).join('');

    const codebase = [
        ['Carry Trade Tools', 'These codes give you a list of currency pairs that have a positive and negative swap. This is useful when you do a Carry Trade strategy.', 3, '2020.01.25'],
        ['Dynamic Stop Loss', 'Dynamic Stop-Loss is a tool for traders who trade without a stop-loss. It gives the traders a trick to trade as if there is no stop-loss but actually using one.', 3, '2020.01.20'],
        ['Cross', 'Candle Cross above or below Conditions', 2.5, '2020.01.11'],
        ['Safe Trend Scalp', 'Safe Trend Scalp is an automatic robot that trades with automatic Trend lines that ea crated with market history.', 3.5, '2020.01.09'],
        ['TimerEA', "It's an expert to open and close orders on a specific day and time.Expert open and close orders only with the same symbol attached.For more information, please visit product's page: https://www.mql5.com/en/market/product/44939", 2.5, '2020.01.01']
    ];
    function stars(rating) {
        let html = '';
        for (let i = 0; i < 5; i++) {
            const half = rating - i === 0.5;
            const cls = rating - i >= 1 ? 'full' : 'empty';
            html += `<svg class="star ${cls}" width="12" height="12"><use href="#${half ? 'halfstar' : 'star'}"/></svg>`;
        }
        return html;
    }
    document.getElementById('codebase').innerHTML = codebase.map(([name, text, rating, date]) =>
        `<tr><td><svg width="12" height="12"><use href="#expert"/></svg>${name}</td><td>${text}</td><td>${stars(rating)}</td><td>${date}</td></tr>`
    ).join('');

    // chart scales
    const prices = ['1.11559', '1.11444', '1.11334', '1.11219', '1.11109', '1.10994', '1.10884', '1.10769', '1.10659', '1.10544', '1.10429', '1.10319', '1.10204', '1.10094', '1.09979', '1.09869'];
    document.getElementById('prices').insertAdjacentHTML('afterbegin', prices.map(p => `<span>${p}</span>`).join(''));
    const times = ['9 Jan 2020', '10 Jan 10:30', '13 Jan 02:30', '13 Jan 18:30', '14 Jan 10:30', '15 Jan 02:30', '15 Jan 18:30', '16 Jan 10:30', '17 Jan 02:30', '17 Jan 18:30', '20 Jan 10:30', '21 Jan 02:30', '21 Jan 18:30', '22 Jan 10:30', '23 Jan 02:30', '23 Jan 18:30', '24 Jan 10:30', '27 Jan 02:30', '27 Jan 18:30', '28 Jan 10:30', '29 Jan 02:30', '29 Jan 18:30'];
    document.getElementById('times').innerHTML = times.map(t => `<span>${t}</span>`).join('');

    // indicator lines
    const rise = '901,180 904,185 907,177 912,166 916,169 920,175 923,170 930,176 934,191 940,190 942,164 946,176 950,160 955,160 959,149 962,183 964,197 967,229 971,230 973,239 976,225 980,228 985,224 990,215 994,228 997,216 1003,217 1007,221 1011,215';
    const fall = '1012,211 1015,219 1018,225 1021,212 1027,202 1032,207 1036,211 1039,231 1044,274 1045,279 1047,275 1051,281 1053,298 1058,309 1062,327 1064,328 1068,336 1071,333 1076,333 1083,340 1087,344 1090,338 1092,321 1100,325 1105,320 1108,326 1112,325 1115,315 1119,311 1122,322 1125,331 1127,346 1129,341 1133,351 1137,351 1146,361 1153,358 1159,354 1161,364 1163,343 1167,340 1170,323 1177,326 1184,326 1189,340 1192,327 1197,321 1202,318 1206,324 1213,325 1219,340 1221,324 1222,293 1228,289 1230,298 1232,288 1233,267 1235,267 1237,277 1240,278 1242,315 1245,318 1251,333 1260,330 1262,341 1265,358 1268,362 1273,359 1277,353 1279,364 1284,368 1287,362 1293,364 1298,355 1301,363 1304,355 1308,365 1311,338 1315,332 1317,355 1321,368 1324,343 1327,340 1329,322 1331,369 1332,378 1334,378 1336,341 1340,348 1344,354 1349,336 1357,331 1360,335 1363,326 1367,325 1368,317 1370,345 1376,341 1380,357 1392,357 1393,339 1398,345 1401,358 1405,348 1407,333 1409,330 1413,340 1416,330 1418,292 1420,323 1422,377 1424,397 1426,447 1429,477 1433,452 1438,445 1443,434 1448,432 1452,441 1458,441 1461,445 1464,443 1468,447 1475,453 1479,457 1486,453 1488,440 1490,423 1492,448 1494,451 1496,490 1497,486 1501,496 1507,492 1511,485 1515,495 1518,515 1521,520 1528,513 1532,503 1536,516 1539,515 1545,500 1550,499 1553,503 1557,496 1561,513 1568,517 1572,508 1574,513 1576,492 1579,491 1583,520 1587,532 1589,514 1593,524 1599,523 1601,507 1603,507 1605,527 1608,542 1612,536 1616,552 1620,552 1630,539 1642,540 1644,525 1648,537 1657,533 1665,531 1668,542 1670,531 1673,538 1678,534 1683,545 1686,567 1689,574 1692,569 1695,582 1700,580 1703,566 1707,565 1713,552 1719,534 1725,529 1731,529 1733,519 1737,540 1740,548 1746,555 1751,557 1755,549 1758,554 1760,577 1763,574 1768,582 1773,591 1777,587 1782,593 1785,601 1787,587 1789,569 1792,573 1795,585 1799,579 1803,582 1806,537 1807,538 1809,557 1811,575 1817,565 1819,546 1824,551 1828,553 1832,559 1837,549 1842,547 1844,555';
    document.getElementById('upLine').setAttribute('points', rise);
    document.getElementById('downLine').setAttribute('points', fall);

    function levelAt(points, x) {
        for (let i = 1; i < points.length; i++) {
            const [x0, y0] = points[i - 1];
            const [x1, y1] = points[i];
            if (x <= x1) return y0 + (y1 - y0) * (x - x0) / (x1 - x0);
        }
        return points[points.length - 1][1];
    }

    // price bars hang below the falling line and stand on the rising one
    let dark = '';
    let light = '';
    function drawBars(line, side) {
        const points = line.split(' ').map(p => p.split(',').map(Number));
        const last = points[points.length - 1][0];
        let n = 0;
        for (let x = points[0][0] + 1; x < last; x += 2, n++) {
            const y = levelAt(points, x);
            const near = [levelAt(points, Math.max(points[0][0], x - 2)), y, levelAt(points, x + 2)];
            const edge = side > 0 ? Math.max(...near) : Math.min(...near);
            const size = 3 + Math.abs(Math.sin(n * 0.29)) * 8 + (n * 7 % 5) * 1.5 + (n % 13 === 0 ? 9 : 0);
            const group = Math.sin(n * 0.5) + Math.sin(n * 0.17);
            if (group > 0.4) dark += `M${x} ${y.toFixed(0)}V${(edge + side * size).toFixed(0)}`;
            else light += `M${x + 0.5} ${y.toFixed(0)}V${(edge + side * size).toFixed(0)}`;
        }
    }
    drawBars(rise, -1);
    drawBars(fall, 1);
    document.getElementById('barsDark').setAttribute('d', dark);
    document.getElementById('barsLight').setAttribute('d', light);
</script>
</body>
</html>
```

FILE: styles.css
```css
* {
    box-sizing: border-box;
}
body {
    margin: 0;
    min-height: 100vh;
    display: flex;
    flex-direction: column;
    background: #cecece;
    font-family: "Open Sans", "Noto Sans", sans-serif;
    font-size: 11px;
    line-height: 14px;
    color: #111;
}
h1, h2, h3, h4, p, dl, dd, ul {
    margin: 0;
    padding: 0;
    font-weight: normal;
}
button, input, select {
    font: inherit;
    color: inherit;
    padding: 0;
    margin: 0;
    border: 0;
    background: none;
    border-radius: 0;
}
table {
    border-collapse: collapse;
}
i {
    flex: none;
}
.sprite {
    position: absolute;
    width: 0;
    height: 0;
}

/* outer window */
.host-title {
    height: 24px;
    display: flex;
    align-items: center;
    padding: 2px 6px 0;
    border-top: 1px solid #929292;
    background: linear-gradient(#e6e6e6, #cecece);
    color: #666;
}
.host-title h1 {
    flex: 1;
    text-align: center;
    font-size: 12px;
    font-weight: 600;
}
.host-menu {
    border: 4px solid transparent;
    border-top: 5px solid #666;
    border-bottom: 0;
}
.host-buttons {
    display: flex;
    gap: 14px;
}
.host-buttons svg, .host-tab button svg {
    width: 8px;
    height: 8px;
    display: block;
    stroke: #666;
    stroke-width: 2;
}
.host-tabs {
    padding-left: 43px;
    height: 28px;
}
.host-tab {
    display: flex;
    align-items: center;
    gap: 4px;
    width: 110px;
    height: 28px;
    padding-left: 12px;
    border: 1px solid #a5a5a5;
    border-bottom: 0;
    border-radius: 4px 4px 0 0;
    background: #dcdcdc;
    font-size: 12px;
    color: #333;
}
.host-tab button {
    margin-left: 4px;
}
.host-tab button svg {
    stroke: #333;
}
.host {
    flex: 1;
    display: flex;
    background: #000;
    border-bottom: 1px solid #999;
}
.side {
    width: 43px;
    margin-top: -28px;
    padding: 3px 1px 0 0;
    background: linear-gradient(#cecece, #afafaf);
    display: flex;
    flex-direction: column;
    align-items: center;
}
.side button {
    width: 34px;
    height: 29px;
    display: flex;
    align-items: center;
    justify-content: center;
    border-radius: 4px;
}
.side button svg {
    width: 22px;
    height: 22px;
}
.side hr {
    width: 34px;
    margin: 6px 0;
    border: 0;
    border-top: 1px solid #aaa;
}
.side .on {
    border: 1px solid #888;
    background: #b4b4b4;
}
.side .caret::before {
    content: "";
    border: 5px solid transparent;
    border-top-color: #444;
    border-bottom: 0;
}
.side .caret.off::before {
    border-top-color: #888;
}

/* remote desktop */
.desktop {
    position: relative;
    flex: 1;
    min-width: 0;
    margin: 0 26px 0 25px;
    display: flex;
    flex-direction: column;
}
.mt4 {
    flex: 1;
    display: flex;
    flex-direction: column;
    background: #fff;
}
.mt4-title {
    height: 22px;
    display: flex;
    justify-content: space-between;
    align-items: flex-start;
    background: #dadaff;
    padding: 0 2px;
}
.mt4-close {
    width: 44px;
    height: 18px;
    border: 1px solid #567;
    border-top: 0;
}
.mt4-close svg, .win-buttons svg {
    width: 9px;
    height: 9px;
    stroke: #111;
    stroke-width: 2;
}
.mt4-menu {
    height: 20px;
    display: flex;
    align-items: center;
    gap: 7px;
    padding-left: 4px;
    border-bottom: 1px solid #c8c8ba;
}
.mt4-menu a {
    color: #9fa79f;
    text-decoration: none;
}
.mdi {
    margin-left: auto;
    display: flex;
}
.mdi button {
    width: 18px;
    height: 17px;
    border: 1px solid #c8c8ba;
}
.mdi svg {
    width: 8px;
    height: 8px;
    stroke: #7ea696;
    fill: none;
    stroke-width: 2;
}
.notepad {
    position: absolute;
    top: 0;
    left: 67px;
    right: 52px;
    height: 37px;
    display: flex;
    align-items: flex-start;
    padding: 0 5px 0 11px;
    border: 1px solid #232;
    background: linear-gradient(#6cdaff 28px, #6cb8ff 28px, #6cb8ff 30px, #6cdaff 30px);
}
.notepad > svg {
    margin-top: 5px;
}
.notepad h2 {
    flex: 1;
    padding-left: 74px;
    text-align: center;
    font-size: 14px;
    line-height: 28px;
}
.win-buttons {
    display: flex;
}
.win-buttons button {
    width: 26px;
    height: 20px;
    border: 1px solid #343;
    border-top: 0;
}
.win-buttons .red {
    width: 44px;
    background: #da4a55;
}

/* toolbars */
.toolbar {
    height: 26px;
    display: flex;
    align-items: center;
    border-bottom: 1px solid #d8d8d0;
}
.toolbar + .toolbar {
    height: 25px;
}
.grip {
    width: 4px;
    height: 20px;
    margin: 0 1px;
    background: repeating-linear-gradient(#bbb 0 1px, #fff 1px 2px);
}
.sep {
    width: 1px;
    height: 20px;
    margin: 0 1px;
    background: #bdbdb0;
}
.tool {
    width: 27px;
    height: 22px;
    display: flex;
    align-items: center;
    justify-content: center;
}
.tool svg {
    width: 16px;
    height: 16px;
}
.tool.down {
    border-top: 1px solid #b4b4a4;
    border-left: 1px solid #b4b4a4;
}
.tool.drop {
    width: 36px;
    gap: 5px;
}
.tool.drop::after {
    content: "";
    border: 3px solid transparent;
    border-top-color: #000;
    border-bottom: 0;
}
.tool.order {
    width: 85px;
    gap: 3px;
}
.tool.auto {
    width: 94px;
    gap: 3px;
    margin-right: 4px;
}
.toolbar-right {
    margin-left: auto;
    padding-right: 4px;
    display: flex;
}
.toolbar-right .tool svg {
    width: 18px;
}
.tool.letter {
    color: #444;
    font-weight: 600;
}
.tool.period {
    font-size: 9px;
    color: #333;
}

/* docked panels */
.main {
    flex: 1;
    display: flex;
    border-bottom: 1px solid #c8c8ba;
}
.dock {
    display: flex;
    flex-direction: column;
    padding-top: 2px;
    border-right: 1px solid #b8b8aa;
}
.watch {
    width: 194px;
    padding-left: 3px;
}
.data {
    width: 250px;
    padding: 2px 3px 0 4px;
}
.dock-head {
    height: 13px;
    display: flex;
}
.dock-head h2 {
    flex: 1;
    font-size: 11px;
    line-height: 12px;
    height: 12px;
    white-space: nowrap;
    background: linear-gradient(90deg, #b9d6f8, #dadaff 12px);
}
.dock-head i {
    width: 30px;
    height: 12px;
    background: #daffff;
}
.dock-head button, .strip button {
    width: 14px;
    font-size: 11px;
    line-height: 10px;
    font-weight: 700;
}
.watch .dock-head {
    margin-right: 3px;
}
.dock-body {
    flex: 1;
    display: flex;
    margin-right: 4px;
    border: 1px solid #b8b8aa;
    border-bottom: 0;
    min-height: 0;
}
.table-clip {
    flex: 1 1 0;
    height: 0;
    min-height: 100%;
    overflow: hidden;
}
.quotes {
    width: 100%;
    table-layout: fixed;
}
.quotes tr {
    height: 19px;
}
.quotes thead tr {
    height: 18px;
}
.quotes th {
    padding: 0 4px 0 5px;
    font-weight: normal;
    text-align: right;
}
.quotes th:first-child {
    width: 72px;
    text-align: left;
}
.quotes th:nth-child(2) {
    width: 48px;
}
.quotes td {
    padding: 0 2px 0 0;
    border-top: 1px solid #dadaff;
    border-right: 1px solid #dadaff;
    text-align: right;
    line-height: 14px;
}
.quotes td:first-child {
    text-align: left;
    padding-left: 3px;
    white-space: nowrap;
}
.quotes td svg {
    vertical-align: -3px;
    margin-right: 4px;
}
.quotes .up td + td {
    color: #2020f0;
}
.quotes .down td + td {
    color: #f81818;
}
.quotes .muted {
    color: #b8b8b8;
}
.scroll {
    flex: none;
    width: 16px;
    display: flex;
    flex-direction: column;
    border-left: 1px solid #c8c8ba;
}
.arrow {
    height: 15px;
    display: flex;
    align-items: center;
    justify-content: center;
    border: 1px solid #c8c8ba;
    margin-top: auto;
}
.arrow.up {
    margin-top: 0;
}
.arrow::before {
    content: "";
    width: 4px;
    height: 4px;
    border: solid #777766;
    border-width: 0 1px 1px 0;
    transform: rotate(45deg);
}
.arrow.up::before {
    transform: rotate(225deg);
}
.thumb {
    height: 15px;
    background: #dadaff;
    border: 1px solid #c4c4d8;
    display: flex;
    align-items: center;
    justify-content: center;
}
.thumb.tall {
    height: 104px;
}
.thumb.mid {
    height: 22px;
    margin-top: 50px;
}
.thumb.tall::before, .thumb.mid::before {
    content: "";
    width: 7px;
    height: 8px;
    background: repeating-linear-gradient(#667 0 1px, #dadaff 1px 3px);
}
.tabs {
    display: flex;
    height: 24px;
    border-top: 1px solid #222;
    padding-left: 2px;
}
.tester .tabs, .navigator .tabs {
    height: 25px;
}
.tabs button {
    height: 18px;
    padding: 0 9px;
    color: #86869e;
    position: relative;
    white-space: nowrap;
}
.tabs button::after {
    content: "";
    position: absolute;
    right: 0;
    top: 3px;
    height: 12px;
    border-right: 1px solid #777;
}
.tabs .active {
    margin-top: -1px;
    height: 19px;
    color: #111;
    background: #fff;
    border: 1px solid #222;
    border-top: 0;
}
.tabs .active::after {
    display: none;
}
.tabs sub {
    color: #f22;
    font-size: 9px;
    font-weight: 700;
    line-height: 0;
    margin-left: 1px;
}
.data-symbol {
    height: 19px;
    display: flex;
    align-items: center;
    gap: 3px;
    padding-left: 2px;
    border-top: 1px solid #c8c8ba;
}
.values {
    width: 100%;
    border-left: 1px solid #dadaff;
}
.values tr {
    height: 19px;
}
.values td {
    padding: 0 3px 0 2px;
    border: solid #dadaff;
    border-width: 1px 0;
    line-height: 14px;
}
.values td + td {
    width: 114px;
    text-align: right;
    border-left: 1px solid #dadaff;
}
.values .plain {
    padding-left: 19px;
}
.values svg {
    vertical-align: -4px;
    margin-right: 1px;
    height: 15px;
}

/* chart */
.chart {
    flex: 1;
    min-width: 0;
    display: flex;
    flex-direction: column;
}
.chart-frame {
    flex: 1;
    display: flex;
    flex-direction: column;
    margin: 0 1px 0 2px;
    background: #000;
    border: 1px solid #667;
    color: #eee;
    font-size: 9px;
}
.chart-body {
    flex: 1;
    display: flex;
    margin-top: 2px;
    border-top: 1px solid #fff;
    border-right: 1px solid #fff;
}
.plot {
    flex: 1;
    min-width: 0;
    position: relative;
    border-right: 1px solid #ddd;
}
.plot::after {
    content: "";
    position: absolute;
    right: -2px;
    top: 68%;
    width: 3px;
    height: 10px;
    background: #fff;
}
.plot > svg {
    position: absolute;
    width: 100%;
    height: 100%;
}
.plot-title {
    position: absolute;
    top: 1px;
    right: 2px;
    display: flex;
    align-items: center;
    gap: 2px;
}
.prices {
    width: 43px;
    position: relative;
    display: flex;
    flex-direction: column;
    justify-content: space-between;
    padding-top: 6px;
    margin-bottom: -5px;
    line-height: 12px;
}
.prices span {
    padding-left: 8px;
    background: linear-gradient(#ddd, #ddd) 0 6px / 3px 1px no-repeat;
}
.prices .now {
    position: absolute;
    top: 82%;
    left: 2px;
    right: 3px;
    padding-left: 6px;
    background: #fff;
    color: #111;
}
.times {
    height: 21px;
    display: grid;
    grid-template-columns: repeat(22, 1fr);
    padding-right: 39px;
    background: linear-gradient(#ddd, #ddd) 0 0 / calc(100% - 44px) 1px no-repeat;
}
.times span {
    padding: 4px 0 0 1px;
    line-height: 12px;
    white-space: nowrap;
    background: linear-gradient(#ddd, #ddd) 1px 0 / 1px 4px no-repeat;
}
.chart-tabs {
    display: flex;
    justify-content: space-between;
    height: 18px;
    border-top: 1px solid #333;
}
.chart-tabs .tabs {
    height: 18px;
    margin-top: -1px;
    padding-left: 6px;
}
.tab-nav {
    display: flex;
    gap: 12px;
    padding-right: 8px;
    color: #78789a;
}

/* expert panel over the chart */
.ea {
    position: relative;
    width: 385px;
    margin-left: 1px;
    border: solid #00e8ff;
    border-width: 2px 2px 0;
    background: #4a4a55;
    color: #eee;
    font-family: "Liberation Sans", sans-serif;
    font-size: 11px;
    line-height: 12px;
}
.ea-top {
    height: 17px;
    display: flex;
    align-items: center;
    padding-left: 1px;
    background: #0066ff;
}
.ea-label {
    width: 58px;
    margin-right: 22px;
    background: #ff4455;
    text-align: center;
    font-size: 9px;
    font-weight: 700;
}
.ea-ver {
    width: 76px;
}
.ea-full {
    width: 60px;
}
.ea-btns {
    margin-left: auto;
    display: flex;
    gap: 5px;
    padding-right: 2px;
}
.ea-btns button {
    width: 16px;
    height: 15px;
    background: #4a4a55;
    border-radius: 2px;
    font-weight: 700;
}
.ea-btns .gap {
    margin-left: 6px;
}
.ea-name {
    position: relative;
    height: 43px;
    margin-bottom: 6px;
    background: #2090ff;
}
.ea-name h3 {
    padding: 6px 0 0 160px;
    font-size: 19px;
    line-height: 20px;
    color: #00f0ff;
}
.ea-name p {
    padding-left: 157px;
}
.ea-logo {
    position: absolute;
    left: 10px;
    top: -2px;
    width: 40px;
    height: 24px;
}
.sad {
    position: absolute;
    right: 3px;
    top: 14px;
    width: 21px;
    height: 21px;
}
.bar {
    position: relative;
    height: 13px;
    margin: 0 1px;
    background: #6c6ca8;
    border-radius: 2px;
    text-align: center;
    box-shadow: 0 1px #333322;
}
.bar::after {
    content: "";
    position: absolute;
    right: 6px;
    top: 4px;
    border: 5px solid transparent;
    border-bottom-color: #fff;
    border-top: 0;
}
.bars {
    display: grid;
    grid-template-columns: 1fr 1fr;
    gap: 3px;
}
.ea-trade {
    display: grid;
    grid-template-columns: 1fr 86px;
    justify-items: center;
    padding: 5px 7px 11px 0;
    height: 75px;
}
.modify, .buy {
    width: 86px;
    height: 21px;
    grid-column: 2;
    border-radius: 2px;
    background: #6c6ca8;
    font-size: 12px;
}
.modify {
    grid-row: 1;
}
.buy {
    grid-row: 3;
    background: #42b049;
    border: 2px outset #5fd066;
    border-radius: 0;
}
.lots {
    grid-column: 1;
    grid-row: 2;
    padding-left: 98px;
    font-size: 9px;
}
.lot-box {
    grid-column: 1;
    grid-row: 3;
    display: flex;
    gap: 5px;
    padding-left: 100px;
    align-items: center;
}
.lot-box input {
    width: 46px;
    height: 16px;
    background: #fff;
    color: #222;
    text-align: center;
    font-size: 12px;
}
.lot-box button {
    font-size: 16px;
}
.info {
    display: grid;
    padding-left: 7px;
    line-height: 10px;
    grid-auto-rows: 10px;
    white-space: nowrap;
}
.info.wide {
    grid-template-columns: 105px 87px 105px 70px;
    height: 77px;
    padding-top: 5px;
    align-content: space-between;
}
.info.wide.top {
    height: 74px;
    padding-top: 2px;
}
.info.target {
    grid-template-columns: 67px 125px 78px 1fr;
    align-content: space-between;
    height: 54px;
    padding: 7px 0 6px 7px;
}
.info.account {
    grid-template-columns: 63px 129px 62px 1fr;
    padding-top: 7px;
    height: 38px;
}
.info.account + .wide {
    height: 47px;
    padding: 9px 0 7px 7px;
}
.info .off {
    color: #e8809a;
}
.info .on {
    color: #10e090;
}
.info .to-edge {
    text-align: right;
}
.info .inset {
    text-align: right;
    padding-right: 10px;
}
.info .long {
    font-size: 10px;
}

.trend {
    position: absolute;
    left: 6px;
    top: 25px;
    width: 152px;
    border: 1px solid #000050;
    background: #000;
}
.trend b, .trend h4 {
    font-family: Inter, sans-serif;
    font-weight: 800;
}
.trend-head {
    height: 38px;
    padding: 5px 0 0 6px;
    background: #000050;
    color: #fff;
}
.trend-head h4 {
    color: #00ffff;
    font-size: 13px;
    line-height: 14px;
}
.trend-head b {
    display: block;
    font-size: 9px;
    line-height: 16px;
    white-space: nowrap;
}
.trend-signal {
    height: 57px;
    padding: 3px 0 0 6px;
    color: #e6e600;
    font-size: 10px;
    line-height: 15px;
}
.trend-signal h4 {
    color: #f00;
    font-size: 15px;
    line-height: 18px;
}
.trend-stats {
    padding: 3px 0 3px 6px;
    border-top: 8px solid #000050;
    font-size: 10px;
    line-height: 15px;
    color: #ddd;
}
.trend-stats b {
    color: #fff;
    font-size: 11px;
}

/* tester and navigator */
.lower {
    position: relative;
    display: flex;
    padding-top: 4px;
    border-bottom: 2px solid #d8d8d0;
}
.strip {
    width: 14px;
    display: flex;
    flex-direction: column;
    border-right: 1px solid #c8c8ba;
}
.strip button {
    width: 13px;
    height: 12px;
}
.strip i {
    height: 31px;
    background: #daffff;
}
.strip.short i {
    height: 22px;
}
.strip span {
    flex: 1;
    writing-mode: vertical-rl;
    transform: rotate(180deg);
    padding-top: 2px;
    font-size: 10px;
    line-height: 12px;
    background: linear-gradient(#b9d6f8, #dadaff 20px);
}
.nav-strip {
    width: 18px;
    padding-left: 3px;
    border-left: 1px solid #d8d8d0;
}
.tester {
    flex: 1;
    min-width: 0;
    border-top: 1px solid #c8c8ba;
}
.tester-form {
    display: grid;
    grid-template-columns: 113px minmax(0, 1fr) 111px 115px 141px;
    grid-template-rows: 22px 22px 22px 22px 44px;
    align-items: center;
    gap: 6px 8px;
    padding: 7px 11px 7px 8px;
    font-family: "Liberation Sans", sans-serif;
    font-size: 10px;
}
.tester-form > label {
    text-align: right;
}
.tester-form > button {
    height: 22px;
    border: 1px solid #c8c8ba;
}
.tester-form select {
    width: 100%;
    height: 20px;
    padding: 0 18px 0 2px;
    border: 1px solid #808070;
    appearance: none;
    background: #fff url("data:image/svg+xml,%3Csvg xmlns='http://www.w3.org/2000/svg' width='8' height='6'%3E%3Cpath d='M1 1l3 3 3-3' fill='none' stroke='%23666655' stroke-width='2'/%3E%3C/svg%3E") no-repeat right 4px center;
}
.tester-form .file {
    grid-column: 2 / 5;
}
.dates {
    grid-column: 1 / 3;
    display: flex;
    align-items: center;
    padding-left: 63px;
}
.dates label {
    margin-right: 3px;
}
.dates label[for="from"] {
    margin: 0 7px 0 88px;
}
.dates label[for="to"] {
    margin: 0 7px 0 106px;
}
.date-box {
    display: flex;
    align-items: center;
    width: 114px;
    height: 20px;
    padding: 0 4px 0 1px;
    border: 1px solid #808070;
}
.date-box input {
    width: 0;
    flex: 1;
}
.tester-form input[type="checkbox"] {
    width: 15px;
    height: 15px;
    appearance: none;
    border: 1px solid #c8c8ba;
}
.tester-form input[type="checkbox"]:checked {
    background: url("data:image/svg+xml,%3Csvg xmlns='http://www.w3.org/2000/svg' width='9' height='9'%3E%3Cpath d='M1 4l2 3 5-6' fill='none' stroke='%23000' stroke-width='2'/%3E%3C/svg%3E") no-repeat center;
}
.optim {
    grid-column: 3 / 5;
    display: flex;
    align-items: center;
    justify-content: flex-end;
    gap: 4px;
}
.progress {
    grid-column: 1 / 5;
    height: 20px;
    background: #00e000;
}
.tester-form .start {
    font-weight: 700;
}
.progress, .tester-form .start {
    align-self: start;
    margin-top: 22px;
}
.navigator {
    width: 435px;
    margin-right: 4px;
    border-top: 1px solid #c8c8ba;
    display: flex;
    flex-direction: column;
}
.tree-box {
    flex: 1;
    display: flex;
}
.tree {
    flex: 1;
    margin-left: 13px;
    padding-left: 20px;
    border-left: 1px dotted #998;
    list-style: none;
    line-height: 17px;
    height: 170px;
    white-space: nowrap;
}
.tree li {
    display: flex;
    align-items: center;
    gap: 6px;
    height: 17px;
    border-left: 1px dotted #998;
}
.tree li::before {
    content: "";
    width: 10px;
    margin-right: -6px;
    border-top: 1px dotted #998;
}

/* terminal */
.terminal {
    flex: 1;
    min-width: 0;
    margin-right: 4px;
    border-top: 1px solid #c8c8ba;
}
.terminal-box {
    display: flex;
}
.codebase {
    flex: 1;
    width: 100%;
    table-layout: fixed;
}
.codebase tr {
    height: 19px;
}
.codebase thead tr {
    height: 18px;
}
.codebase th {
    padding: 0 6px;
    font-weight: normal;
    text-align: left;
}
.codebase th:first-child {
    width: 326px;
}
.codebase th:nth-child(3) {
    width: 95px;
}
.codebase th:last-child {
    width: 76px;
    text-align: right;
}
.codebase small {
    color: #889;
    font-size: 8px;
    line-height: 8px;
    margin-left: 8px;
}
.codebase td {
    padding: 0 3px;
    border-bottom: 1px solid #e4e4fc;
    border-right: 1px solid #dadaff;
    line-height: 14px;
    white-space: nowrap;
    overflow: hidden;
}
.codebase td:last-child {
    text-align: right;
    padding-right: 4px;
}
.codebase td:first-child svg {
    vertical-align: -3px;
    margin-right: 6px;
}
.star {
    fill: #fff;
    stroke: #a8a8c8;
    vertical-align: -2px;
    margin-right: 5px;
}
.star.full {
    fill: #ffdf78;
    stroke: #b9954a;
}
.terminal-row {
    padding-top: 3px;
    border-bottom: 1px solid #c8c8ba;
}
.cursor {
    position: absolute;
    left: 0;
    top: 41px;
    width: 12px;
    height: 20px;
}

/* status bar and taskbar */
.status {
    height: 21px;
    display: flex;
    align-items: center;
}
.status span {
    height: 17px;
    line-height: 17px;
    padding-left: 5px;
    border-left: 1px solid #c8c8ba;
}
.status .help {
    flex: 1;
    padding-left: 1px;
    border: 0;
}
.profile {
    width: 111px;
}
.w98 {
    width: 98px;
}
.w66 {
    width: 66px;
}
.traffic {
    width: 122px;
    display: flex;
    align-items: center;
    gap: 3px;
}
.taskbar {
    height: 38px;
    display: flex;
    border-top: 1px solid #344;
    background: #6cdaff;
}
.taskbar button {
    width: 56px;
    margin-right: 3px;
    display: flex;
    align-items: center;
    justify-content: center;
}
.taskbar button:first-child {
    width: 46px;
}
.taskbar button svg {
    width: 30px;
    height: 30px;
}
.taskbar .open {
    border: solid #3c8aac;
    border-width: 0 1px;
}
.taskbar .current {
    background: #b9d9ff;
}
.tray {
    margin-left: auto;
    display: flex;
    align-items: center;
    gap: 8px;
    padding-right: 10px;
}
.clock {
    display: flex;
    flex-direction: column;
    width: 62px;
    text-align: center;
    line-height: 16px;
    white-space: nowrap;
}
```
